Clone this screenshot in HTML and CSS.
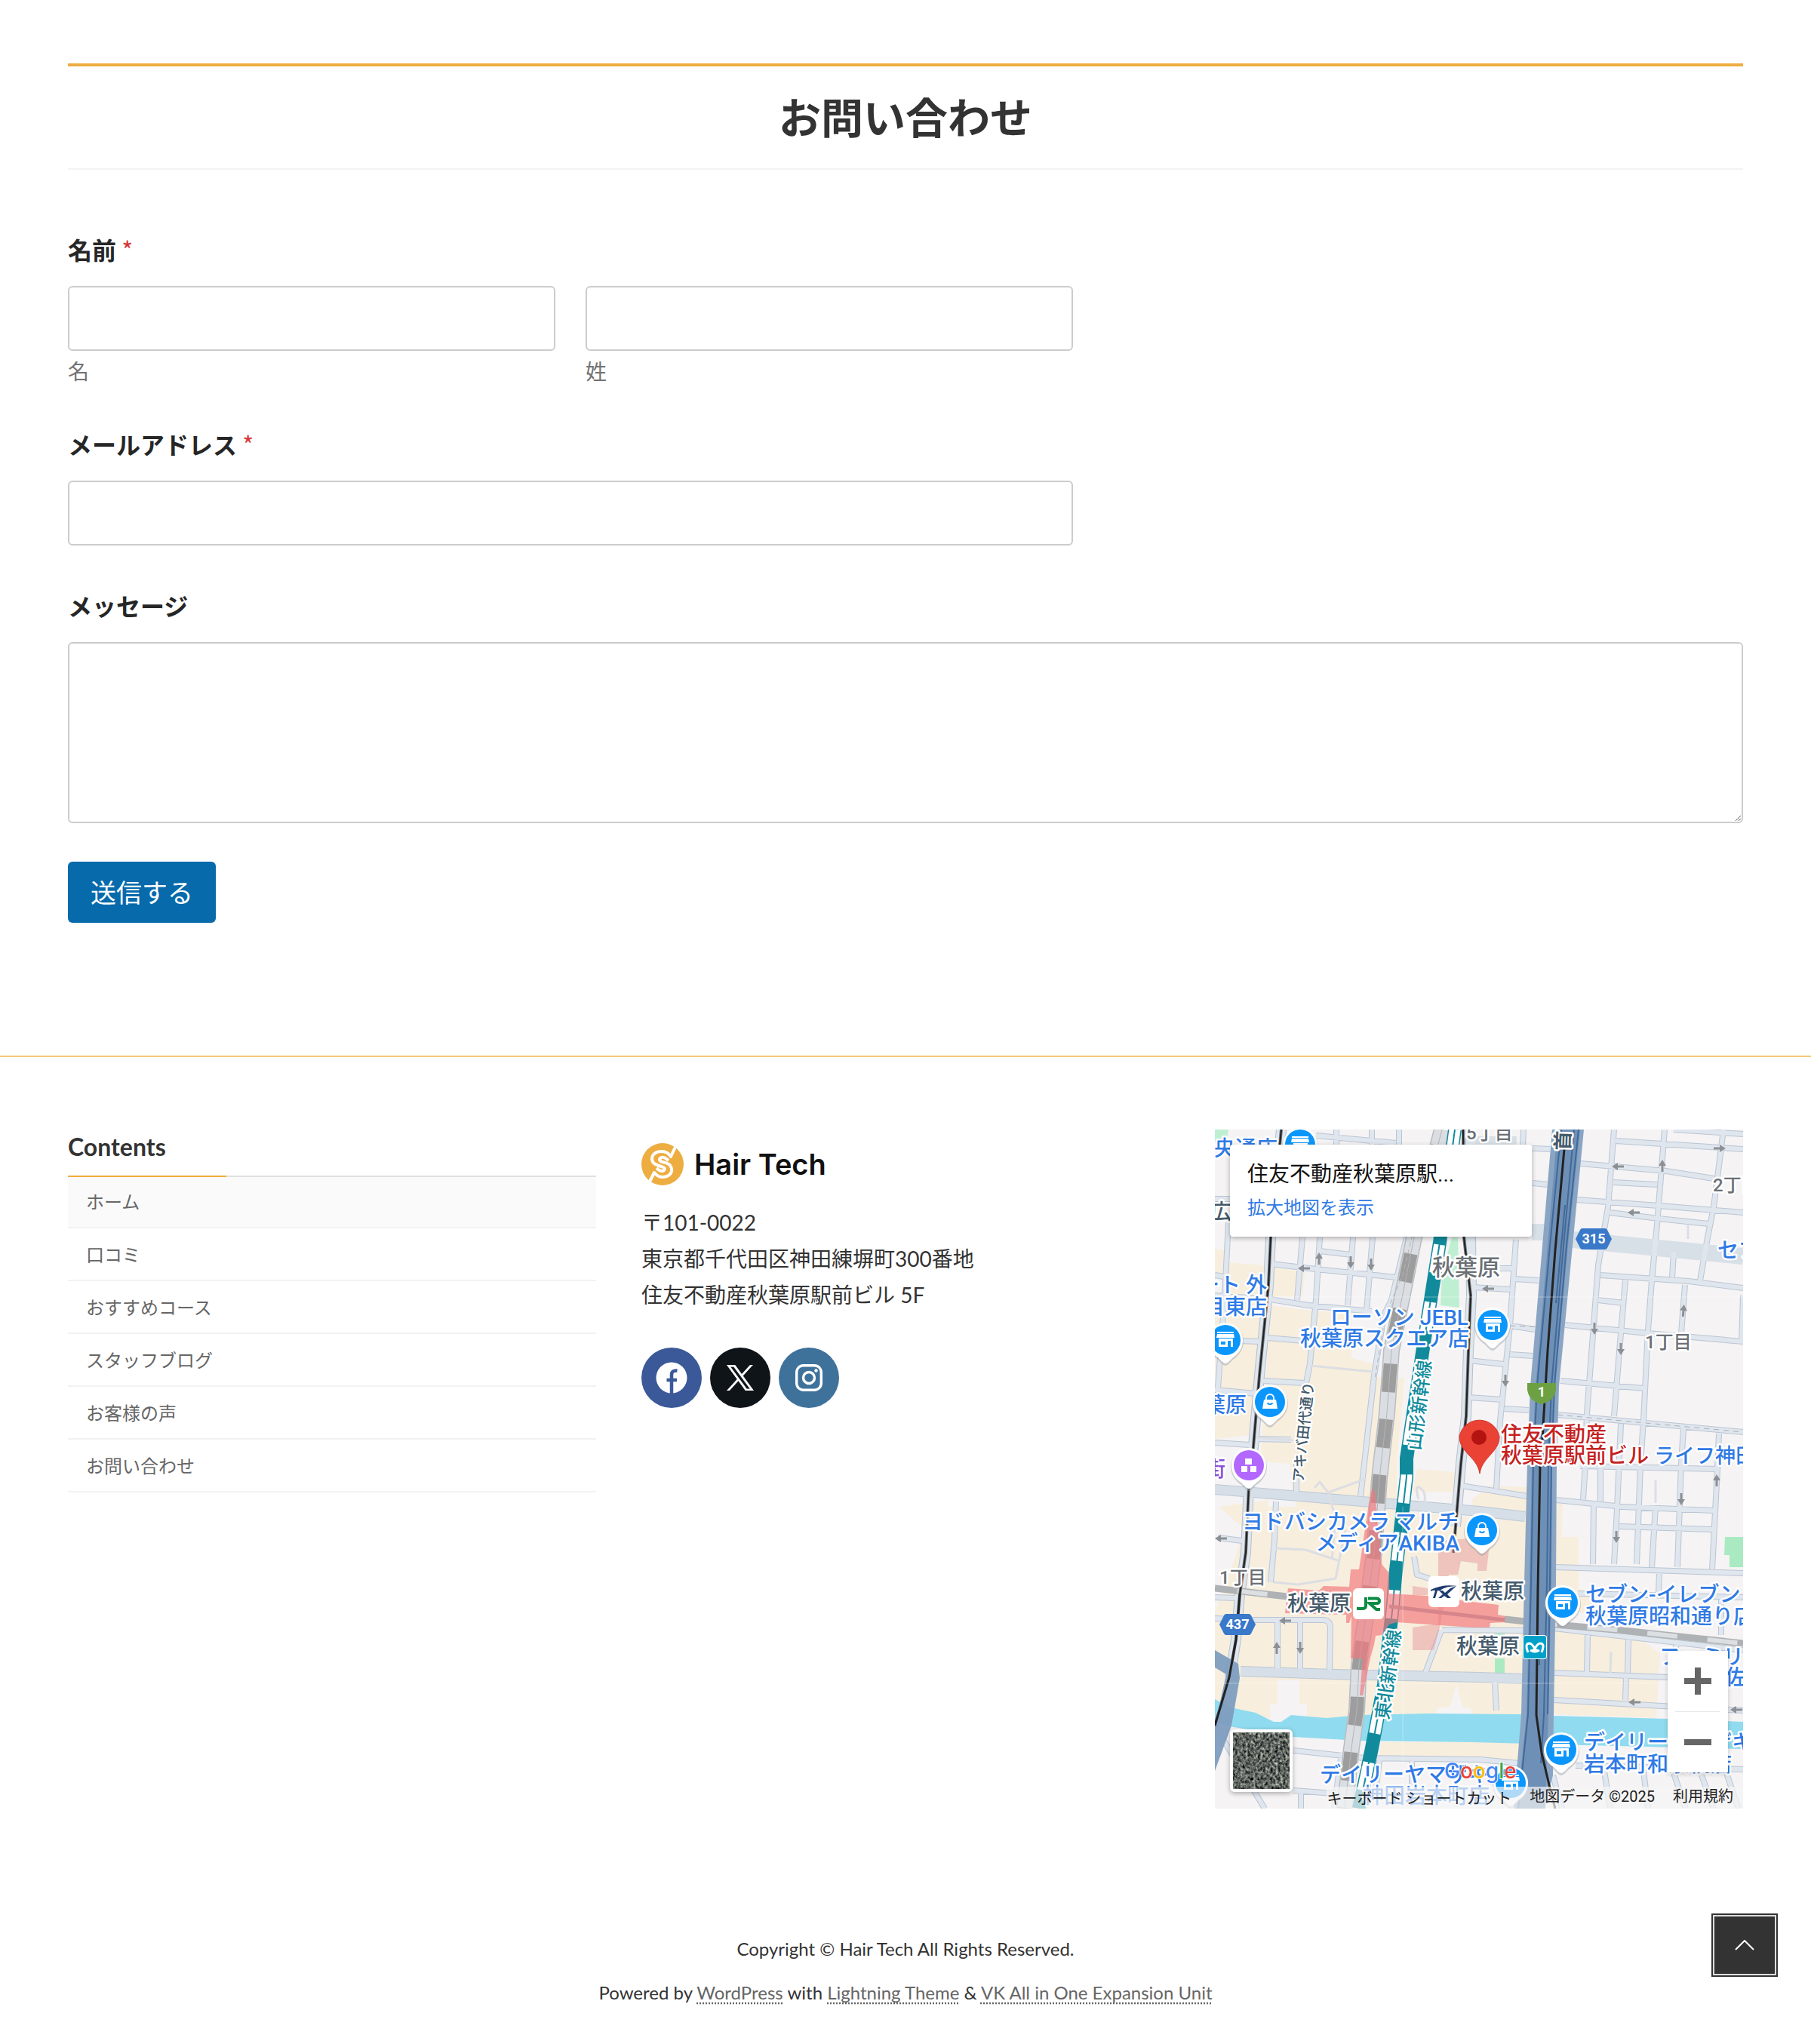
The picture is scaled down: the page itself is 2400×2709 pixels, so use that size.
FILE: index.html
```html
<!DOCTYPE html>
<html lang="ja">
<head>
<meta charset="utf-8">
<meta name="viewport" content="width=device-width, initial-scale=1">
<title>お問い合わせ | Hair Tech</title>
<link rel="stylesheet" href="styles.css">
</head>
<body>
<main class="container main">
  <h2 class="section-title">お問い合わせ</h2>
  <form class="contact-form">
    <fieldset class="field field-medium">
      <legend class="field-label">名前 <span class="required">*</span></legend>
      <div class="name-row">
        <div class="name-cell">
          <input class="text-input" id="first-name" type="text" required>
          <label class="sublabel" for="first-name">名</label>
        </div>
        <div class="name-cell">
          <input class="text-input" id="last-name" type="text" required>
          <label class="sublabel" for="last-name">姓</label>
        </div>
      </div>
    </fieldset>
    <div class="field field-medium">
      <label class="field-label" for="email">メールアドレス <span class="required">*</span></label>
      <input class="text-input" id="email" type="email" required>
    </div>
    <div class="field field-last">
      <label class="field-label" for="message">メッセージ</label>
      <textarea class="text-input message" id="message"></textarea>
    </div>
    <button class="submit" type="submit">送信する</button>
  </form>
</main>

<footer class="site-footer">
  <div class="container footer-columns">
    <nav class="footer-nav">
      <h3 class="footer-title">Contents</h3>
      <ul class="menu">
        <li><a class="current" href="#">ホーム</a></li>
        <li><a href="#">口コミ</a></li>
        <li><a href="#">おすすめコース</a></li>
        <li><a href="#">スタッフブログ</a></li>
        <li><a href="#">お客様の声</a></li>
        <li><a href="#">お問い合わせ</a></li>
      </ul>
    </nav>

    <div class="shop">
      <a class="logo" href="#">
        <svg class="logo-mark" viewBox="0 0 56 56" aria-hidden="true">
          <circle cx="28" cy="28" r="28" fill="#eead40"/>
          <path d="M45 5L39 18C36 13 32 11 27 11C19 11 14 15 14 21C14 27 20 29 26 31C31 32 32 34 30 36C27 38 23 36 20 33M10 53L17 39C20 43 24 45 28 45C36 45 41 40 40 34C39 28 34 26 28 25C23 24 23 20 27 19C31 18 33 21 36 23" fill="none" stroke="#fff" stroke-width="4" stroke-linejoin="round"/>
        </svg>
        <span class="logo-text">Hair Tech</span>
      </a>
      <p class="address">〒101-0022<br>東京都千代田区神田練塀町300番地<br>住友不動産秋葉原駅前ビル 5F</p>
      <div class="social">
        <a class="social-link facebook" href="#" aria-label="Facebook">
          <svg width="42" height="42" viewBox="0 0 42 42"><circle cx="21" cy="21" r="20.500" fill="#fff"/><path d="M21 42V17Q21 11 28.500 11.500M14.500 24H28" fill="none" stroke="#3b5998" stroke-width="4.500"/></svg>
        </a>
        <a class="social-link x" href="#" aria-label="X">
          <svg width="36" height="34" viewBox="0 0 24 24" preserveAspectRatio="none"><path fill="#fff" stroke="#fff" stroke-width=".5" d="M14.234 10.162 22.977 0h-2.072l-7.591 8.824L7.251 0H.258l9.168 13.343L.258 24H2.330l8.016-9.318L16.749 24h6.993zm-2.837 3.299-.929-1.329L3.076 1.560h3.182l5.965 8.532.929 1.329 7.754 11.090h-3.182z"/></svg>
        </a>
        <a class="social-link instagram" href="#" aria-label="Instagram">
          <svg width="36" height="36" viewBox="0 0 36 36" fill="none" stroke="#fff"><rect x="1.700" y="1.700" width="32.600" height="32.600" rx="9" stroke-width="3.400"/><circle cx="18" cy="18" r="7.500" stroke-width="3.400"/><circle cx="27.500" cy="8.500" r="2.200" fill="#fff" stroke="none"/></svg>
        </a>
      </div>
    </div>

    <div class="map">
      <svg class="map-canvas" viewBox="0 0 700 900" preserveAspectRatio="xMidYMid slice" role="img" aria-label="秋葉原周辺の地図">
        <defs>
          <path id="arrow" d="M-8 -1.500H0V-5L8 0L0 5V1.500H-8Z" fill="#8c9094"/>
          <g id="pin"><path d="M0 32C-3 32-6 28-10 24C-18 19-24 10-24 0A24 24 0 0 1 24 0C24 10 18 19 10 24C6 28 3 32 0 32Z" fill="#9aa0a6" opacity=".45" transform="translate(0 2)"/><path d="M0 31C-3 31-6 27-10 23C-18 18-23 10-23 0A23 23 0 0 1 23 0C23 10 18 18 10 23C6 27 3 31 0 31Z" fill="#fff"/></g>
          <g id="store"><use href="#pin"/><circle r="20" fill="#0b96fb"/><path d="M-11 -11H11V-9H-11ZM-11 -8H11L12 -3H-12ZM-9 -2H10V9H7V1H3V9H-9ZM-6 2V6H0V2Z" fill="#fff" fill-rule="evenodd"/></g>
          <g id="bag"><use href="#pin"/><circle r="20" fill="#0b96fb"/><path d="M-8 -3H8L10 9H-10Z" fill="#fff"/><path d="M-5 -2V-5A5 5 0 0 1 5 -5V-2" fill="none" stroke="#fff" stroke-width="2"/><path d="M-3.500 1.500Q0 5 3.500 1.500" fill="none" stroke="#0b96fb" stroke-width="2"/></g>
          <path id="hex" d="M-24 0L-18 -12Q-17 -14 -15 -14H15Q17 -14 18 -12L24 0L18 12Q17 14 15 14H-15Q-17 14 -18 12Z" fill="#3a78c9"/>
          <path id="minor" d="M529 0L521 103L508 180L503 246L493 376L491 443L488 490M596 0L586 126L579 200L574 266L568 386L564 443L559 576M674 0L661 103L653 143L643 200M544 200L538 270L529 380M538 390L533 503L529 576M623 206L618 270M700 220L698 283M621 396L618 443L613 580M668 403L666 450L659 583M511 443V493M502 496L501 576M584 500L579 580M589 586L588 616M671 623V670M608 163L606 196
          M531 15L700 26M608 0L700 6M484 45L598 55L661 65M528 70L586 73M479 93L588 101L700 110M523 110L588 118L654 125M511 193L628 201L700 210M508 226L541 230M464 259L574 270L700 281M458 333L568 343M454 378L700 401M484 446L668 450M453 491L541 500L661 505M536 526L659 530M451 580L700 588M481 615L700 620M449 661L700 690M449 720L600 726M449 756L700 770M494 670L493 720M548 676L547 720M545 726L544 756M611 681V700
          M478 843L700 848M516 850L524 900M568 850L574 900M608 853L624 900M644 853L661 900M678 853L694 900M448 856L460 900
          M409 0L408 20M421 25L444 26M421 71L441 73M399 146L391 260L378 386L373 476M378 184H394M398 198L429 200M341 209L391 212M391 260L424 265M336 306L383 311M391 298L421 300M336 355L381 358M384 370L416 372M326 472L414 486
          M116 143L109 226M139 143L134 226L126 310L121 336M183 143L176 233M209 143L201 240M224 246L211 326L198 443L193 486M254 143L234 226L224 246M18 123L13 220L4 343M74 178L134 185L241 196M139 161L181 166M0 220L73 225L124 233L208 241M69 276L128 281M0 193L11 195M31 280L58 281M63 333L118 336M0 345L54 350M54 410L101 411M0 415L46 418M134 8L240 18M161 0V20M208 0V20M244 0V20M0 92H20
          M108 443V486M81 493L79 543L74 600M4 541L36 545M0 648L51 650H144Q153 651 153 660L152 716M83 653V716M113 653V716M0 620L28 621M301 663L409 664M300 664L279 720M264 566L268 590L284 595M104 823L198 833L351 835L404 840M168 826L158 900M104 876L158 880M114 876V900M218 836L214 870M261 833V870M0 790L66 900M371 730L373 770"/>
          <path id="shinkansen" d="M318 0L298 150L278 276L254 436V460L239 593L236 630L224 736L208 820L191 900"/>
          <path id="jr" d="M301 0L264 143L254 193L234 293L228 376L221 436L218 463L211 560L198 660L191 710L188 770L181 820L172 900"/>
          <filter id="aerial" x="0" y="0" width="1" height="1" color-interpolation-filters="sRGB"><feTurbulence type="fractalNoise" baseFrequency=".3 .25" numOctaves="4" seed="7"/><feColorMatrix values="1 .6 0 0 -.43 1 .6 0 0 -.41 .9 .6 0 0 -.38 0 0 0 0 1"/></filter>
          <clipPath id="frame"><rect width="700" height="900"/></clipPath>
        </defs>
        <g clip-path="url(#frame)">
        <rect width="700" height="900" fill="#f5f3f4"/>
        <path fill="#f7eedd" d="M0 158L12 160L10 195L0 193ZM16 176L66 180L48 405L0 410V225H10ZM76 183L119 188L116 222L74 221ZM74 233L126 240L181 243V303L211 311L209 327L251 330L241 443L240 605H110L100 443L60 440ZM80 490L400 520L405 780H0V640L40 530L5 500ZM268 450L330 455L325 480H262ZM365 472L414 474V775H341V490ZM454 495H461L460 540H482V610H500V640H449ZM449 665L557 670L590 695L585 780L448 775ZM220 812L404 812L402 835L218 832Z"/>
        <path fill="#f5f3f4" d="M83 730H112V762H122V790H73V762H83ZM320 735L328 765L340 767V790H294V767L312 765ZM108 480H70V500H108Z"/>
        <path fill="#90dbef" d="M0 755L21 766L54 773L78 785H88L101 776L148 780L191 776L281 774L404 775L449 777L600 781L700 785V821L449 815L341 812L191 810L104 805L13 790L0 785Z"/>
        <path fill="#beefd2" d="M0 0H18L16 12L0 16ZM314 143H322L324 236L299 233L301 193Z"/>
        <path fill="#a9eac2" d="M676 540H700V580H682V564H675ZM371 701H384V721H371ZM371 668H384V676H371Z"/>
        <g fill="none" stroke-linejoin="round">
          <path d="M88 0L74 143L71 206L59 326L51 420L45 473L41 560L33 616L28 676L20 726M339 0V143L340 220L336 293L333 380L326 443L319 526" stroke="#b5c0ce" stroke-width="14"/>
          <use href="#minor" stroke="#bac5d4" stroke-width="8"/>
          <path d="M0 477L100 485L351 506L411 513M34 718L160 722L351 726L409 728M421 136L435 138M474 146L700 168M330 20H400" stroke="#bcc8d5" stroke-width="14"/>
          <path d="M474 146L700 168M340 20H400M420 136H440" stroke="#d8e0e7" stroke-width="22"/>
          <path d="M88 0L74 143L71 206L59 326L51 420L45 473L41 560L33 616L28 676L20 726M339 0V143L340 220L336 293L333 380L326 443L319 526" stroke="#dfe6ee" stroke-width="12"/>
          <use href="#minor" stroke="#e0e6ee" stroke-width="6"/>
          <path d="M0 477L100 485L351 506L411 513M34 718L160 722L351 726L409 728" stroke="#d6dfe7" stroke-width="12"/>
          <path d="M454 378L700 401M391 260L440 262" stroke="#aaafb3" stroke-width="1" stroke-dasharray="7 6"/>
          <path d="M128 313L209 321M54 408L105 412M132 475L139 467L150 481L200 463M150 481L160 515L155 570M81 555L120 557L163 571M173 530L160 595L110 603L78 600M270 490Q264 470 272 475Q280 480 278 494M627 127V145M584 465V495M524 720L525 692" stroke="#dcdee3" stroke-width="3"/>
          <path d="M0 608L96 619M384 649L451 656L541 664L700 681" stroke="#aeb2b5" stroke-width="9"/>
          <path d="M0 608L96 619M384 649L451 656L541 664L700 681" stroke="#dcdfe2" stroke-width="6" stroke-dasharray="40 40" stroke-dashoffset="-30"/>
          <use href="#jr" stroke="#b9bdc2" stroke-width="22"/>
          <use href="#jr" stroke="#dadde1" stroke-width="19"/>
          <use href="#jr" stroke="#9d9d9d" stroke-width="18" stroke-dasharray="38 36" stroke-dashoffset="-22"/>
          <use href="#jr" stroke="#b2b5b9" stroke-width="1"/>
          <path d="M264 130L249 193L226 245L212 330" stroke="#b1b5bb" stroke-width="1" stroke-dasharray="6 4"/>
          <use href="#shinkansen" stroke="#118b9c" stroke-width="18"/>
          <use href="#shinkansen" stroke="#fff" stroke-width="15" stroke-dasharray="38 39"/>
          <use href="#shinkansen" stroke="#118b9c" stroke-width="2"/>
          <path d="M88 0L74 143L71 206L59 326L51 420L45 473L41 560L33 616L28 676L19 726L0 790M329 0L330 143L339 220L336 293L333 380L326 443L319 526L316 561" stroke="#6d7278" stroke-width="4"/>
          <path d="M88 0L74 143L71 206L59 326L51 420L45 473L41 560L33 616L28 676L19 726L0 790M329 0L330 143L339 220L336 293L333 380L326 443L319 526L316 561" stroke="#222" stroke-width="2"/>
        </g>
        <path fill="#7f9dbf" opacity=".95" d="M0 690L31 708L33 727L22 790L0 850V790L15 722L0 713Z"/>
        <path d="M33 616L28 676L19 726L0 790" fill="none" stroke="#222" stroke-width="3"/>
        <path fill="#e59a9c" opacity=".5" d="M296 545L365 540L360 585H348V575L326 572L322 590H310L298 660L290 690H262V660L296 655ZM262 605L282 608V617H262Z"/>
        <path fill="#f2797d" opacity=".68" d="M208 476L212 480L221 576L231 588V615L281 618L341 626L376 630L375 643L385 645L384 653L365 654L364 660L341 660L241 653L231 656L221 670L213 671L211 683L206 700L196 750H192L196 701H180L181 645L178 654H174V643L93 641L97 608L138 611L144 605L178 606L180 583H191L204 496Z"/>
        <path d="M231 632L384 650" stroke="#d6868b" stroke-width="5"/>
        <path fill="#8aa5c4" d="M447 0H489L474 154L456 340L453 443L452 600L449 775L448 856L436 900H396L406 775L410 600L414 443L418 340L434 154Z"/>
        <path fill="#6e90b6" d="M454 0H484L468 154L450 340L447 443L446 600L442 775L438 900H400L413 775L417 600L420 443L425 340L441 154Z"/>
        <g fill="none" stroke="#41699a" stroke-width="2">
          <path d="M459 0L444 154L427 340L422 443L419 600L415 775L402 900M476 0L462 154L446 340L442 443L440 600L436 775L432 840M482 0L466 154L450 340L446 443L444 600L441 775M464 100L452 230M430 700V710"/>
          <path d="M463 26L451 160L441 293L434 410L431 443L428 610L426 776L433 826L444 873L451 900" stroke="#222" stroke-width="3"/>
        </g>
        <path d="M0 222H700M0 734H700M249 500V900" stroke="#fff" stroke-width="1" opacity=".35"/>

        <use href="#arrow" transform="translate(669 25)"/>
        <use href="#arrow" transform="translate(593 48) rotate(-90)"/>
        <use href="#arrow" transform="translate(534 49) rotate(180)"/>
        <use href="#arrow" transform="translate(555 110) rotate(180)"/>
        <use href="#arrow" transform="translate(362 211) rotate(180)"/>
        <use href="#arrow" transform="translate(621 240) rotate(-85)"/>
        <use href="#arrow" transform="translate(503 264) rotate(90)"/>
        <use href="#arrow" transform="translate(538 291) rotate(90)"/>
        <use href="#arrow" transform="translate(385 333) rotate(90)"/>
        <use href="#arrow" transform="translate(665 465) rotate(-90)"/>
        <use href="#arrow" transform="translate(618 490) rotate(90)"/>
        <use href="#arrow" transform="translate(532 540) rotate(90)"/>
        <use href="#arrow" transform="translate(556 759) rotate(180)"/>
        <use href="#arrow" transform="translate(691 769) rotate(180)"/>
        <use href="#arrow" transform="translate(118 184) rotate(180)"/>
        <use href="#arrow" transform="translate(138 171) rotate(-90)"/>
        <use href="#arrow" transform="translate(180 176) rotate(90)"/>
        <use href="#arrow" transform="translate(207 179) rotate(90)"/>
        <use href="#arrow" transform="translate(8 542) rotate(180)"/>
        <use href="#arrow" transform="translate(93 651) rotate(180)"/>
        <use href="#arrow" transform="translate(82 687) rotate(-90)"/>
        <use href="#arrow" transform="translate(113 687) rotate(90)"/>

        <g class="place district">
          <text x="333" y="13">5丁目</text><text x="660" y="82">2丁目</text><text x="570" y="290">1丁目</text><text x="6" y="602">1丁目</text>
          <text class="area" x="288" y="193">秋葉原</text>
        </g>
        <g class="place station">
          <text x="-6" y="119">広</text><text x="96" y="638">秋葉原</text><text x="326" y="622">秋葉原</text><text x="320" y="695">秋葉原</text>
          <text class="street" transform="translate(117 468) rotate(-84)">アキバ田代通り</text>
          <text class="expressway" transform="translate(470 28) rotate(-88)">首</text>
        </g>
        <g class="place rail">
          <text transform="translate(272 426) rotate(-83)">山形新幹線</text>
          <text transform="translate(230 783) rotate(-82)">東北新幹線</text>
        </g>
        <g class="place business">
          <text x="-1" y="35">央通店</text>
          <g text-anchor="end">
            <text x="69" y="216">ート 外</text><text x="69" y="245">目東店</text><text x="42" y="375">葉原</text>
            <text x="336" y="259">ローソン JEBL</text><text x="337" y="287">秋葉原スクエア店</text>
            <text x="323" y="530">ヨドバシカメラ マルチ</text><text x="324" y="558">メディアAKIBA</text>
          </g>
          <text x="666" y="170">セブン</text><text class="narrow" x="582" y="442">ライフ神田</text>
          <text x="491" y="626">セブン-イレブン</text><text x="491" y="655">秋葉原昭和通り店</text>
          <text x="589" y="709">ファミリ</text><text x="676" y="736">佐</text>
          <text x="489" y="822">デイリーヤマザキ</text><text x="489" y="851">岩本町和泉橋店</text>
          <text x="139" y="865">デイリーヤマザキ</text><text x="196" y="893">神田岩本町店</text>
        </g>
        <text class="place shopping" x="14" y="460" text-anchor="end">街</text>

        <use href="#store" transform="translate(113 20)"/>
        <use href="#store" transform="translate(14 279)"/>
        <use href="#store" transform="translate(368 259)"/>
        <use href="#store" transform="translate(461 627)"/>
        <use href="#store" transform="translate(459 822)"/>
        <use href="#store" transform="translate(392 866)"/>
        <use href="#bag" transform="translate(73 361)"/>
        <use href="#bag" transform="translate(354 531)"/>
        <g transform="translate(45 445)"><use href="#pin"/><circle r="20" fill="#b267ff"/><path d="M-5 -9H4V-1H-5ZM-10 1H-2V9H-10ZM2 1H10V9H2Z" fill="#fff"/></g>

        <use href="#hex" transform="translate(502 145)"/><text class="route" x="502" y="151">315</text>
        <use href="#hex" transform="translate(30 656)"/><text class="route" x="30" y="662">437</text>
        <path d="M414 336H452V345Q450 360 433 364Q416 360 414 345Z" fill="#6da043"/><text class="route" x="433" y="354">1</text>

        <rect x="183" y="608" width="41" height="41" rx="6" fill="#fff"/>
        <path d="M200 620V631Q200 635 195 635H188M203 621.500H214Q218 621.500 218 625Q218 628 214 628H205L214 636H219" fill="none" stroke="#0b8a43" stroke-width="4"/>
        <rect x="283" y="592" width="41" height="41" rx="6" fill="#fff"/>
        <path d="M286 610Q302 602 321 605Q306 605 298 611H295L292 621H289L292 611Q289 610 286 612ZM297 611H302L305 614L312 608L320 605L308 616L313 621H308L304 618L300 621H296L302 616Z" fill="#1f3b70"/>
        <rect x="408" y="670" width="32" height="32" rx="4" fill="#fff"/><rect x="409" y="671" width="30" height="30" rx="3" fill="#00a0c8"/>
        <path d="M415 693Q410 681 417 681Q420 681 424 688Q428 681 431 681Q438 681 433 693M418 690Q424 694 430 690M424 688L420 692M424 688L428 692" fill="none" stroke="#fff" stroke-width="3"/>

        <path d="M351 456C348 434 324 428 324 407A27 27 0 0 1 377 407C377 428 354 434 351 456Z" fill="#ea4335" stroke="#d23327" stroke-width="1"/>
        <circle cx="350" cy="408" r="10" fill="#b31412"/>
        <g class="place destination"><text x="379" y="414">住友不動産</text><text x="379" y="442">秋葉原駅前ビル</text></g>

        <text class="google" x="304" y="860"><tspan fill="#4285f4">G</tspan><tspan fill="#ea4335">o</tspan><tspan fill="#fbbc05">o</tspan><tspan fill="#4285f4">g</tspan><tspan fill="#34a853">l</tspan><tspan fill="#ea4335">e</tspan></text>
        </g>
      </svg>
      <div class="map-card">
        <div class="map-card-title">住友不動産秋葉原駅...</div>
        <a class="map-card-link" href="#">拡大地図を表示</a>
      </div>
      <button class="map-type" type="button" aria-label="航空写真">
        <svg width="75" height="75" viewBox="0 0 75 75"><rect width="75" height="75" fill="#555" filter="url(#aerial)"/></svg>
      </button>
      <div class="map-zoom">
        <button type="button" aria-label="拡大"><svg width="36" height="36" viewBox="0 0 36 36"><path d="M14 0H22V14H36V22H22V36H14V22H0V14H14Z" fill="#666"/></svg></button>
        <button type="button" aria-label="縮小"><svg width="36" height="36" viewBox="0 0 36 36"><path d="M0 14H36V22H0Z" fill="#666"/></svg></button>
      </div>
      <div class="map-bar">
        <button type="button">キーボード ショートカット</button>
        <span>地図データ ©2025</span>
        <a href="#">利用規約</a>
      </div>
    </div>
  </div>

  <div class="copyright">
    <p>Copyright © Hair Tech All Rights Reserved.</p>
    <p>Powered by <a href="#">WordPress</a> with <a href="#">Lightning Theme</a> &amp; <a href="#">VK All in One Expansion Unit</a></p>
  </div>
</footer>

<a class="page-top" href="#" aria-label="PAGE TOP">
  <svg width="26" height="14" viewBox="0 0 26 14"><path d="M1 13L13 1L25 13" fill="none" stroke="#fff" stroke-width="2"/></svg>
</a>
</body>
</html>
```
FILE: styles.css
```css
* {
  box-sizing: border-box;
}

body {
  margin: 0;
  background: #fff;
  color: #333;
  font-family: Lato, "Noto Sans CJK JP", sans-serif;
  font-size: 28px;
  line-height: 48px;
}

h2, h3, p, ul, fieldset {
  margin: 0;
  padding: 0;
}

a {
  color: #666;
}

button {
  font-family: inherit;
}

.container {
  padding-left: 90px;
  padding-right: 90px;
}

.main {
  padding-top: 84px;
  padding-bottom: 176px;
}

.section-title {
  padding: 28px 0 27px;
  border-top: 4px solid #eead40;
  border-bottom: 2px solid #f4f4f4;
  font-size: 56px;
  line-height: 80px;
  font-weight: 700;
  text-align: center;
}

/* contact form */

.contact-form {
  display: flex;
  flex-direction: column;
  align-items: flex-start;
  padding-top: 84px;
}

.field {
  width: 100%;
  margin-bottom: 58px;
  border: 0;
  min-width: 0;
}

.field-medium {
  width: 60%;
}

.field-last {
  margin-bottom: 51px;
}

.field-label {
  display: block;
  padding: 0;
  margin-bottom: 28px;
  color: #262626;
  font-family: "Noto Sans CJK JP", sans-serif;
  font-size: 32px;
  line-height: 42px;
  font-weight: 700;
}

.required {
  color: #d63637;
  font-weight: 400;
}

.name-row {
  display: flex;
  gap: 40px;
}

.name-cell {
  flex: 1;
}

.text-input {
  display: block;
  width: 100%;
  height: 86px;
  padding: 0 20px;
  border: 2px solid #ccc;
  border-radius: 6px;
  background: #fff;
  color: #333;
  font-family: inherit;
  font-size: 32px;
}

.message {
  height: 240px;
  padding: 16px 20px;
  resize: vertical;
}

.sublabel {
  display: block;
  margin-top: 10px;
  color: #737373;
  font-size: 28px;
  line-height: 34px;
}

.submit {
  height: 81px;
  padding: 0 30px;
  border: 0;
  border-radius: 6px;
  background: #066aab;
  color: #fff;
  font-size: 34px;
  line-height: 50px;
}

/* footer */

.site-footer {
  border-top: 2px solid #f6c878;
  padding-top: 96px;
}

.footer-columns {
  display: grid;
  grid-template-columns: repeat(3, minmax(0, 1fr));
  gap: 60px;
}

.footer-title {
  margin-bottom: 15px;
  font-size: 32px;
  line-height: 46px;
  font-weight: 700;
}

.menu {
  position: relative;
  list-style: none;
}

.menu::before {
  content: "";
  position: absolute;
  inset: 0 0 auto;
  height: 2px;
  background: linear-gradient(to right, #f0ad3c 30%, #e0e0e0 30%);
}

.menu a {
  display: block;
  padding: 12px 24px 10px;
  border-bottom: 2px solid #f2f2f2;
  font-size: 24px;
  line-height: 46px;
  text-decoration: none;
}

.menu .current {
  background: #fafafa;
}

.shop {
  padding-top: 18px;
}

.logo {
  display: flex;
  align-items: center;
  gap: 14px;
  color: #111;
  text-decoration: none;
}

.logo-mark {
  width: 56px;
  height: 56px;
}

.logo-text {
  font-family: Inter, sans-serif;
  font-size: 38px;
  font-weight: 600;
}

.address {
  margin-top: 25px;
}

.social {
  display: flex;
  gap: 11px;
  margin-top: 46px;
}

.social-link {
  display: grid;
  place-items: center;
  width: 80px;
  height: 80px;
  border-radius: 50%;
}

.facebook {
  background: #3b5998;
}

.x {
  background: #0f1419;
}

.instagram {
  background: #3f729b;
}

/* map */

.map {
  position: relative;
  height: 900px;
  overflow: hidden;
  font-family: Roboto, "Noto Sans CJK JP", sans-serif;
}

.map-canvas {
  display: block;
  width: 100%;
  height: 100%;
}

.place {
  font-size: 28px;
  font-weight: 500;
  paint-order: stroke;
  stroke: #fff;
  stroke-width: 5px;
  stroke-linejoin: round;
}

.district {
  fill: #6b7075;
  font-size: 24px;
}

.area {
  font-size: 30px;
}

.station {
  fill: #455a6b;
}

.street {
  font-size: 19px;
}

.expressway {
  font-size: 26px;
  font-weight: 700;
}

.rail {
  fill: #118b9c;
  font-size: 24px;
}

.business {
  fill: #2f7ae5;
}

.narrow {
  font-size: 27px;
}

.shopping {
  fill: #8a4fd8;
}

.destination {
  fill: #c5221f;
}

.route {
  fill: #fff;
  font-size: 18px;
  font-weight: 700;
  text-anchor: middle;
}

.google {
  font-family: Inter, sans-serif;
  font-size: 28px;
  font-weight: 500;
  paint-order: stroke;
  stroke: #fff;
  stroke-width: 2px;
}

.map-card {
  position: absolute;
  top: 20px;
  left: 20px;
  width: 400px;
  height: 122px;
  padding: 19px 23px;
  border-radius: 4px;
  background: #fff;
  box-shadow: 0 2px 6px rgba(0, 0, 0, 0.3);
}

.map-card-title {
  color: #111;
  font-size: 28px;
  line-height: 42px;
}

.map-card-link {
  display: block;
  color: #2f7ae5;
  font-size: 24px;
  line-height: 46px;
  text-decoration: none;
}

.map-type {
  position: absolute;
  left: 20px;
  bottom: 22px;
  padding: 4px;
  border: 0;
  border-radius: 6px;
  background: #fff;
  box-shadow: 0 2px 6px rgba(0, 0, 0, 0.3);
}

.map-type svg {
  display: block;
}

.map-zoom {
  position: absolute;
  right: 20px;
  bottom: 48px;
  width: 80px;
  background: #fff;
  box-shadow: 0 2px 6px rgba(0, 0, 0, 0.2);
}

.map-zoom button {
  display: grid;
  place-items: center;
  width: 100%;
  height: 80px;
  padding: 0;
  border: 0;
  background: none;
}

.map-zoom button + button {
  height: 81px;
  background: linear-gradient(#e6e6e6, #e6e6e6) center top / 60px 1px no-repeat;
}

.map-bar {
  position: absolute;
  right: 0;
  bottom: 0;
  display: flex;
  gap: 24px;
  padding: 0 13px 0 0;
  background: rgba(245, 245, 245, 0.7);
  color: #222;
  font-size: 20px;
  line-height: 27px;
  white-space: nowrap;
}

.map-bar button {
  padding: 0;
  border: 0;
  background: none;
  color: inherit;
  font-size: 20px;
}

.map-bar a {
  color: inherit;
  text-decoration: none;
}

/* copyright */

.copyright {
  display: flex;
  flex-direction: column;
  gap: 20px;
  padding: 167px 90px 49px;
  font-size: 24px;
  line-height: 38px;
  text-align: center;
}

.copyright a {
  text-decoration: underline dotted;
  text-underline-offset: 4px;
}

.page-top {
  position: fixed;
  right: 44px;
  bottom: 89px;
  display: grid;
  place-items: center;
  width: 88px;
  height: 84px;
  border: 2px solid #333;
  background: #333;
  box-shadow: inset 0 0 0 2px #ddd;
}
```
